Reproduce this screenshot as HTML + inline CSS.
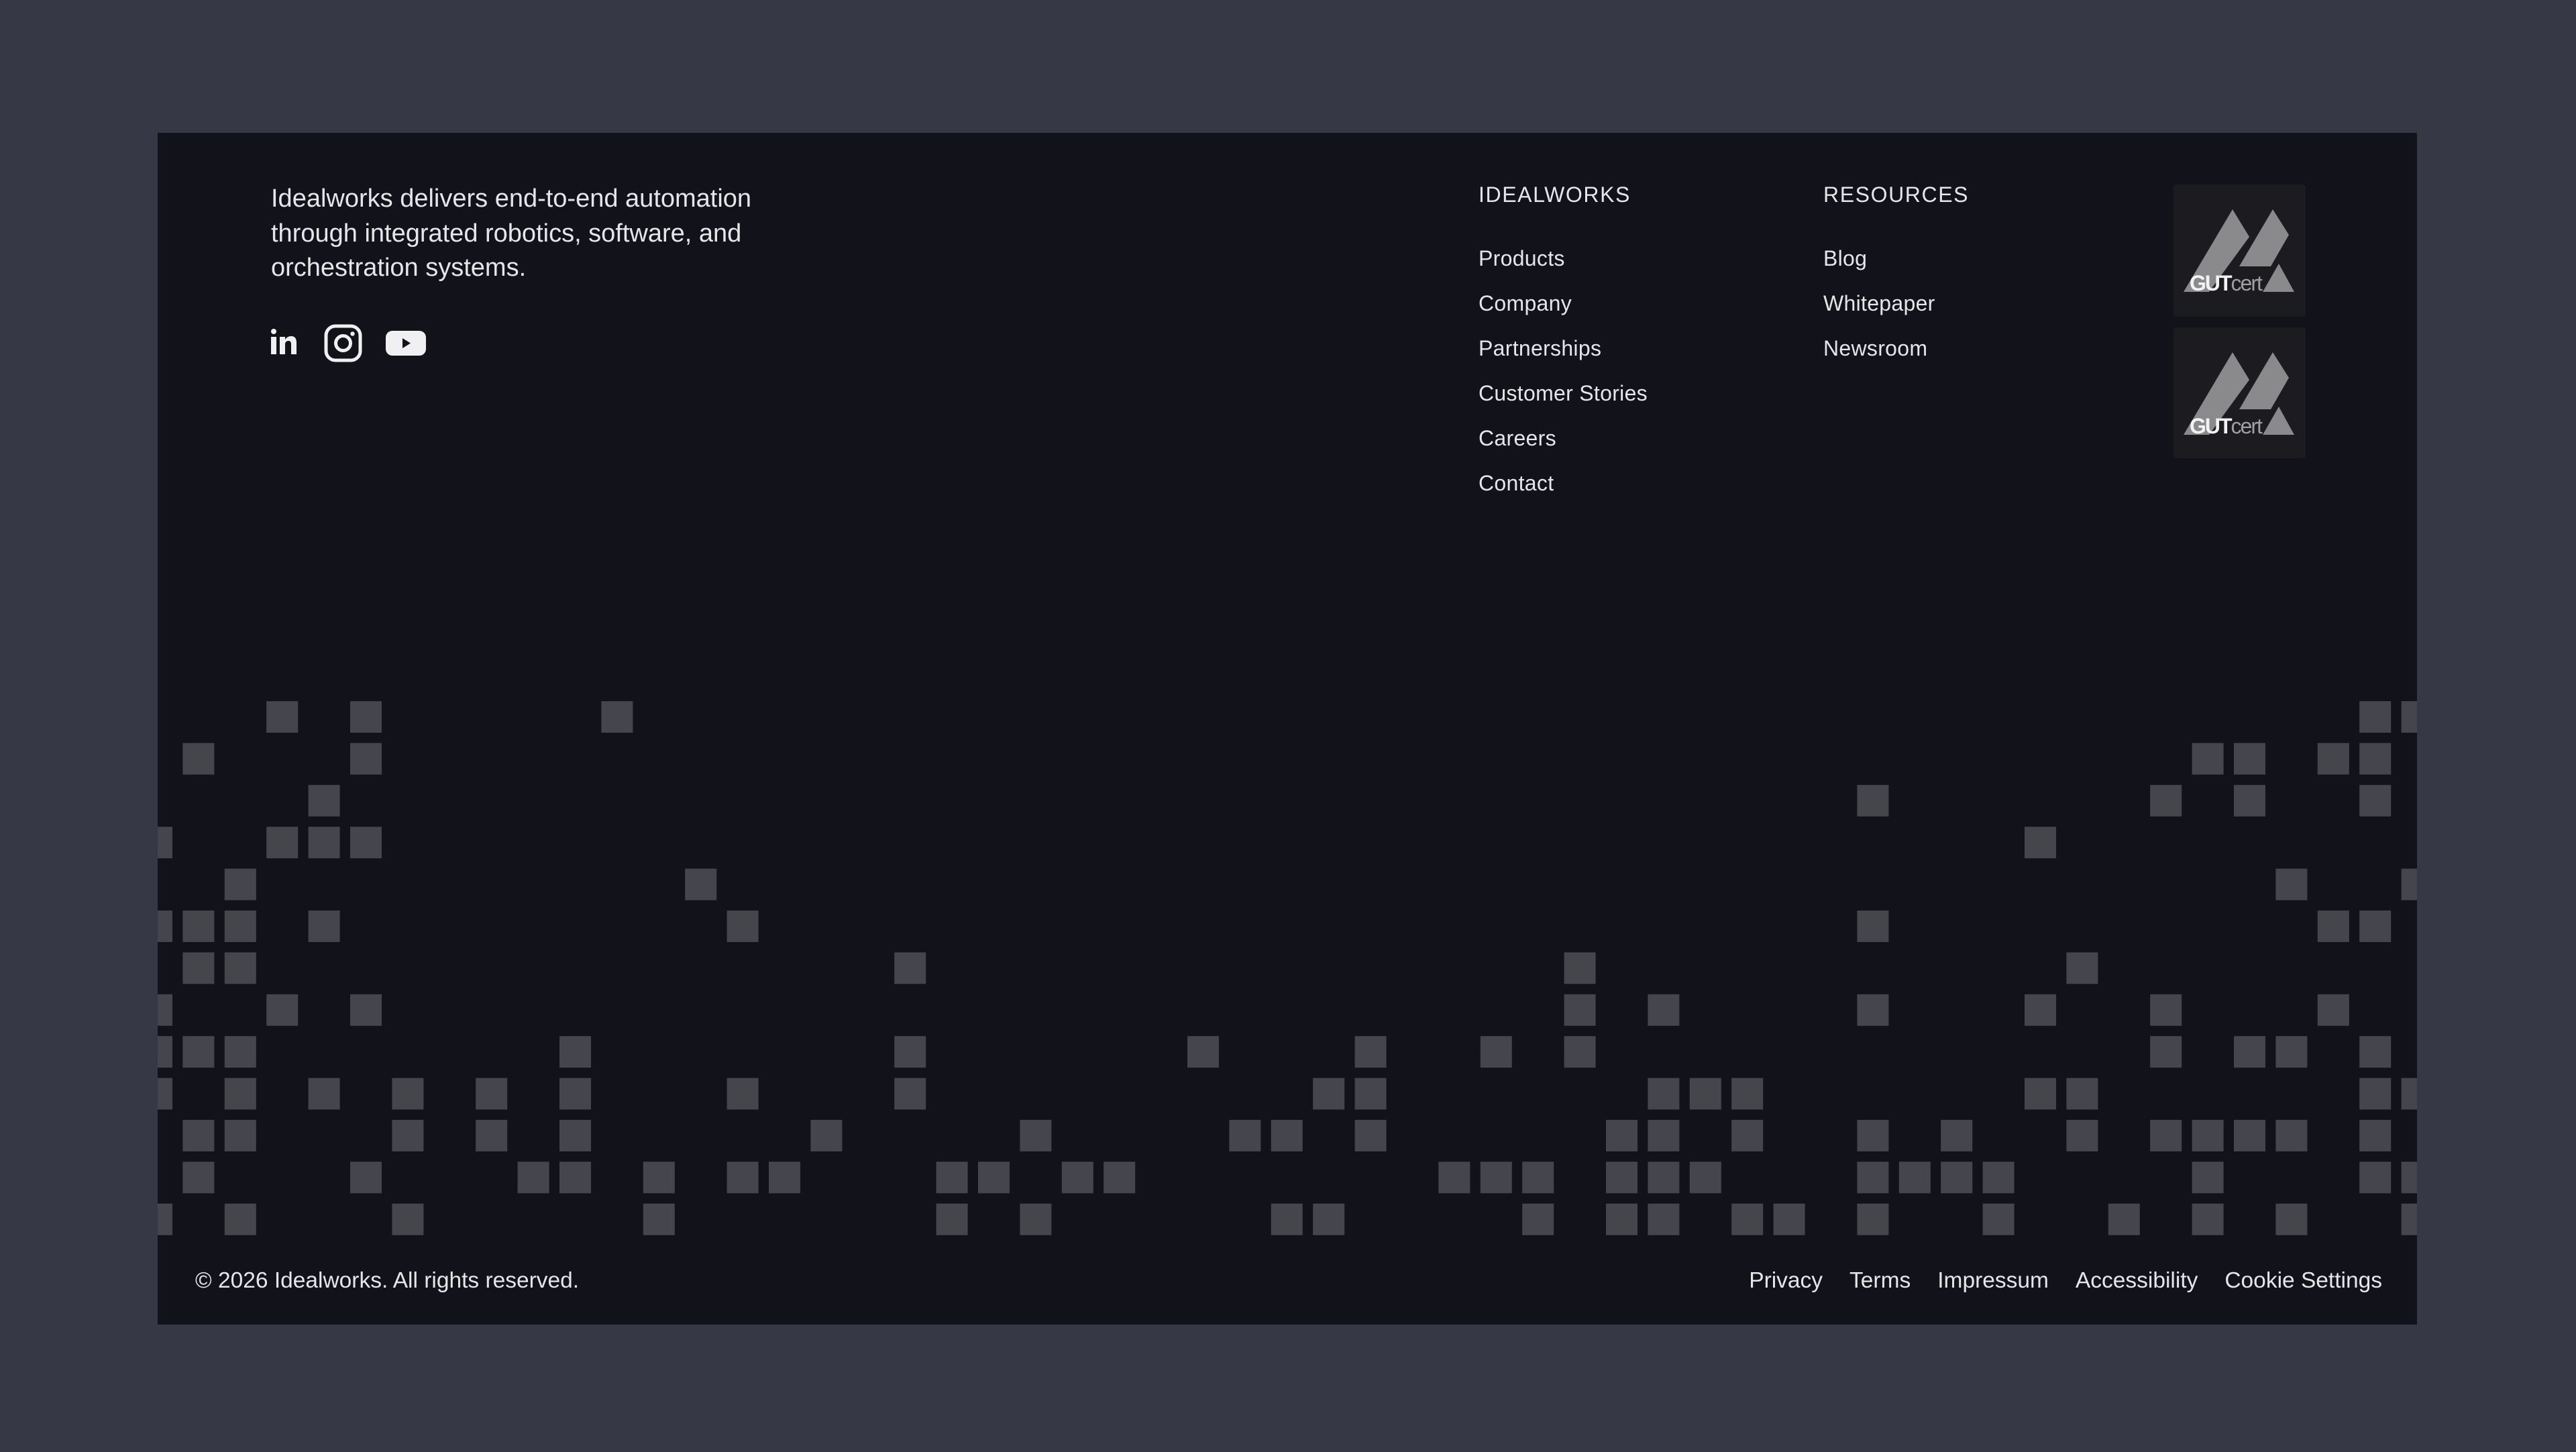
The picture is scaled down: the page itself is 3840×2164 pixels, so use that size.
<!DOCTYPE html>
<html><head><meta charset="utf-8"><style>
html,body{margin:0;padding:0;width:3840px;height:2164px;background:#373846;overflow:hidden}
body{font-family:"Liberation Sans",sans-serif;color:#e6e6e9}
.f{position:absolute;left:235px;top:198px;width:3368px;height:1776px;background:#12131a;overflow:hidden}
.a{position:absolute;white-space:nowrap}
.desc{left:169px;top:73px;font-size:38px;line-height:51.5px}
.h{font-size:32px;letter-spacing:1.6px;top:74px}
.l{font-size:32px;letter-spacing:.3px}
.bot{font-size:33.5px;top:1692px}
</style></head><body>
<div class="f">
<svg class="a" style="left:0;top:0" width="3368" height="1776">
<g fill="#45464c" transform="translate(-25,847) scale(62.4)">
<rect x="3" y="0" width=".753" height=".753"/><rect x="5" y="0" width=".753" height=".753"/><rect x="11" y="0" width=".753" height=".753"/><rect x="53" y="0" width=".753" height=".753"/><rect x="54" y="0" width=".753" height=".753"/>
<rect x="1" y="1" width=".753" height=".753"/><rect x="5" y="1" width=".753" height=".753"/><rect x="49" y="1" width=".753" height=".753"/><rect x="50" y="1" width=".753" height=".753"/><rect x="52" y="1" width=".753" height=".753"/><rect x="53" y="1" width=".753" height=".753"/>
<rect x="4" y="2" width=".753" height=".753"/><rect x="41" y="2" width=".753" height=".753"/><rect x="48" y="2" width=".753" height=".753"/><rect x="50" y="2" width=".753" height=".753"/><rect x="53" y="2" width=".753" height=".753"/>
<rect x="0" y="3" width=".753" height=".753"/><rect x="3" y="3" width=".753" height=".753"/><rect x="4" y="3" width=".753" height=".753"/><rect x="5" y="3" width=".753" height=".753"/><rect x="45" y="3" width=".753" height=".753"/>
<rect x="2" y="4" width=".753" height=".753"/><rect x="13" y="4" width=".753" height=".753"/><rect x="51" y="4" width=".753" height=".753"/><rect x="54" y="4" width=".753" height=".753"/>
<rect x="0" y="5" width=".753" height=".753"/><rect x="1" y="5" width=".753" height=".753"/><rect x="2" y="5" width=".753" height=".753"/><rect x="4" y="5" width=".753" height=".753"/><rect x="14" y="5" width=".753" height=".753"/><rect x="41" y="5" width=".753" height=".753"/><rect x="52" y="5" width=".753" height=".753"/><rect x="53" y="5" width=".753" height=".753"/>
<rect x="1" y="6" width=".753" height=".753"/><rect x="2" y="6" width=".753" height=".753"/><rect x="18" y="6" width=".753" height=".753"/><rect x="34" y="6" width=".753" height=".753"/><rect x="46" y="6" width=".753" height=".753"/>
<rect x="0" y="7" width=".753" height=".753"/><rect x="3" y="7" width=".753" height=".753"/><rect x="5" y="7" width=".753" height=".753"/><rect x="34" y="7" width=".753" height=".753"/><rect x="36" y="7" width=".753" height=".753"/><rect x="41" y="7" width=".753" height=".753"/><rect x="45" y="7" width=".753" height=".753"/><rect x="48" y="7" width=".753" height=".753"/><rect x="52" y="7" width=".753" height=".753"/>
<rect x="0" y="8" width=".753" height=".753"/><rect x="1" y="8" width=".753" height=".753"/><rect x="2" y="8" width=".753" height=".753"/><rect x="10" y="8" width=".753" height=".753"/><rect x="18" y="8" width=".753" height=".753"/><rect x="25" y="8" width=".753" height=".753"/><rect x="29" y="8" width=".753" height=".753"/><rect x="32" y="8" width=".753" height=".753"/><rect x="34" y="8" width=".753" height=".753"/><rect x="48" y="8" width=".753" height=".753"/><rect x="50" y="8" width=".753" height=".753"/><rect x="51" y="8" width=".753" height=".753"/><rect x="53" y="8" width=".753" height=".753"/>
<rect x="0" y="9" width=".753" height=".753"/><rect x="2" y="9" width=".753" height=".753"/><rect x="4" y="9" width=".753" height=".753"/><rect x="6" y="9" width=".753" height=".753"/><rect x="8" y="9" width=".753" height=".753"/><rect x="10" y="9" width=".753" height=".753"/><rect x="14" y="9" width=".753" height=".753"/><rect x="18" y="9" width=".753" height=".753"/><rect x="28" y="9" width=".753" height=".753"/><rect x="29" y="9" width=".753" height=".753"/><rect x="36" y="9" width=".753" height=".753"/><rect x="37" y="9" width=".753" height=".753"/><rect x="38" y="9" width=".753" height=".753"/><rect x="45" y="9" width=".753" height=".753"/><rect x="46" y="9" width=".753" height=".753"/><rect x="53" y="9" width=".753" height=".753"/><rect x="54" y="9" width=".753" height=".753"/>
<rect x="1" y="10" width=".753" height=".753"/><rect x="2" y="10" width=".753" height=".753"/><rect x="6" y="10" width=".753" height=".753"/><rect x="8" y="10" width=".753" height=".753"/><rect x="10" y="10" width=".753" height=".753"/><rect x="16" y="10" width=".753" height=".753"/><rect x="21" y="10" width=".753" height=".753"/><rect x="26" y="10" width=".753" height=".753"/><rect x="27" y="10" width=".753" height=".753"/><rect x="29" y="10" width=".753" height=".753"/><rect x="35" y="10" width=".753" height=".753"/><rect x="36" y="10" width=".753" height=".753"/><rect x="38" y="10" width=".753" height=".753"/><rect x="41" y="10" width=".753" height=".753"/><rect x="43" y="10" width=".753" height=".753"/><rect x="46" y="10" width=".753" height=".753"/><rect x="48" y="10" width=".753" height=".753"/><rect x="49" y="10" width=".753" height=".753"/><rect x="50" y="10" width=".753" height=".753"/><rect x="51" y="10" width=".753" height=".753"/><rect x="53" y="10" width=".753" height=".753"/>
<rect x="1" y="11" width=".753" height=".753"/><rect x="5" y="11" width=".753" height=".753"/><rect x="9" y="11" width=".753" height=".753"/><rect x="10" y="11" width=".753" height=".753"/><rect x="12" y="11" width=".753" height=".753"/><rect x="14" y="11" width=".753" height=".753"/><rect x="15" y="11" width=".753" height=".753"/><rect x="19" y="11" width=".753" height=".753"/><rect x="20" y="11" width=".753" height=".753"/><rect x="22" y="11" width=".753" height=".753"/><rect x="23" y="11" width=".753" height=".753"/><rect x="31" y="11" width=".753" height=".753"/><rect x="32" y="11" width=".753" height=".753"/><rect x="33" y="11" width=".753" height=".753"/><rect x="35" y="11" width=".753" height=".753"/><rect x="36" y="11" width=".753" height=".753"/><rect x="37" y="11" width=".753" height=".753"/><rect x="41" y="11" width=".753" height=".753"/><rect x="42" y="11" width=".753" height=".753"/><rect x="43" y="11" width=".753" height=".753"/><rect x="44" y="11" width=".753" height=".753"/><rect x="49" y="11" width=".753" height=".753"/><rect x="53" y="11" width=".753" height=".753"/><rect x="54" y="11" width=".753" height=".753"/>
<rect x="0" y="12" width=".753" height=".753"/><rect x="2" y="12" width=".753" height=".753"/><rect x="6" y="12" width=".753" height=".753"/><rect x="12" y="12" width=".753" height=".753"/><rect x="19" y="12" width=".753" height=".753"/><rect x="21" y="12" width=".753" height=".753"/><rect x="27" y="12" width=".753" height=".753"/><rect x="28" y="12" width=".753" height=".753"/><rect x="33" y="12" width=".753" height=".753"/><rect x="35" y="12" width=".753" height=".753"/><rect x="36" y="12" width=".753" height=".753"/><rect x="38" y="12" width=".753" height=".753"/><rect x="39" y="12" width=".753" height=".753"/><rect x="41" y="12" width=".753" height=".753"/><rect x="44" y="12" width=".753" height=".753"/><rect x="47" y="12" width=".753" height=".753"/><rect x="49" y="12" width=".753" height=".753"/><rect x="51" y="12" width=".753" height=".753"/><rect x="54" y="12" width=".753" height=".753"/>
</g></svg>

<div class="a desc">Idealworks delivers end-to-end automation<br>through integrated robotics, software, and<br>orchestration systems.</div>

<svg class="a" style="left:168px;top:292px" width="40" height="38" viewBox="0 0 40 38">
<rect x="1" y="0" width="8" height="8" rx="4" fill="#f0f0f2"/>
<rect x="1" y="12" width="8" height="26" fill="#f0f0f2"/>
<path d="M14 12h8v4c2-3 5-5 9-5 6 0 8 4 8 10v17h-8V23c0-3-1-5-4-5s-5 2-5 5v15h-8z" fill="#f0f0f2"/>
</svg>
<svg class="a" style="left:248px;top:285px" width="57" height="57" viewBox="0 0 57 57">
<rect x="3" y="3" width="51" height="51" rx="14" fill="none" stroke="#f0f0f2" stroke-width="5"/>
<circle cx="28.5" cy="28.5" r="11" fill="none" stroke="#f0f0f2" stroke-width="5"/>
<circle cx="42.5" cy="14.5" r="3.2" fill="#f0f0f2"/>
</svg>
<svg class="a" style="left:340px;top:295px" width="60" height="37" viewBox="0 0 60 37">
<rect x="0" y="0" width="60" height="37" rx="10" fill="#f0f0f2"/>
<path d="M25 11l12 7.5-12 7.5z" fill="#12131a"/>
</svg>

<div class="a h" style="left:1969px">IDEALWORKS</div>
<div class="a l" style="left:1969px;top:169px">Products</div>
<div class="a l" style="left:1969px;top:236px">Company</div>
<div class="a l" style="left:1969px;top:303px">Partnerships</div>
<div class="a l" style="left:1969px;top:370px">Customer Stories</div>
<div class="a l" style="left:1969px;top:437px">Careers</div>
<div class="a l" style="left:1969px;top:504px">Contact</div>

<div class="a h" style="left:2483px">RESOURCES</div>
<div class="a l" style="left:2483px;top:169px">Blog</div>
<div class="a l" style="left:2483px;top:236px">Whitepaper</div>
<div class="a l" style="left:2483px;top:303px">Newsroom</div>

<svg class="a" style="left:3005px;top:77px" width="197" height="197" viewBox="0 0 197 197">
<rect width="197" height="197" rx="4" fill="#1c1c20"/>
<polygon points="15,160 88,37 113,78 53,160" fill="#8a8a8c"/>
<polygon points="98,122 148,37 172,75 145,122" fill="#8a8a8c"/>
<polygon points="133,160 157,118 180,160" fill="#8a8a8c"/>
<text x="24" y="158" font-family="Liberation Sans,sans-serif" font-weight="bold" font-size="32" fill="#f2f2f2" letter-spacing="-2">GUT<tspan fill="#a0a0a2" font-weight="normal">cert</tspan></text>
</svg>
<svg class="a" style="left:3005px;top:290px" width="197" height="195" viewBox="0 0 197 195">
<rect width="197" height="195" rx="4" fill="#1c1c20"/>
<polygon points="15,160 88,37 113,78 53,160" fill="#8a8a8c"/>
<polygon points="98,122 148,37 172,75 145,122" fill="#8a8a8c"/>
<polygon points="133,160 157,118 180,160" fill="#8a8a8c"/>
<text x="24" y="158" font-family="Liberation Sans,sans-serif" font-weight="bold" font-size="32" fill="#f2f2f2" letter-spacing="-2">GUT<tspan fill="#a0a0a2" font-weight="normal">cert</tspan></text>
</svg>

<div class="a bot" style="left:56px">© 2026 Idealworks. All rights reserved.</div>
<div class="a bot" style="right:52px">
<span>Privacy</span><span style="margin-left:40px">Terms</span><span style="margin-left:40px">Impressum</span><span style="margin-left:40px">Accessibility</span><span style="margin-left:40px">Cookie Settings</span>
</div>
</div>
</body></html>
